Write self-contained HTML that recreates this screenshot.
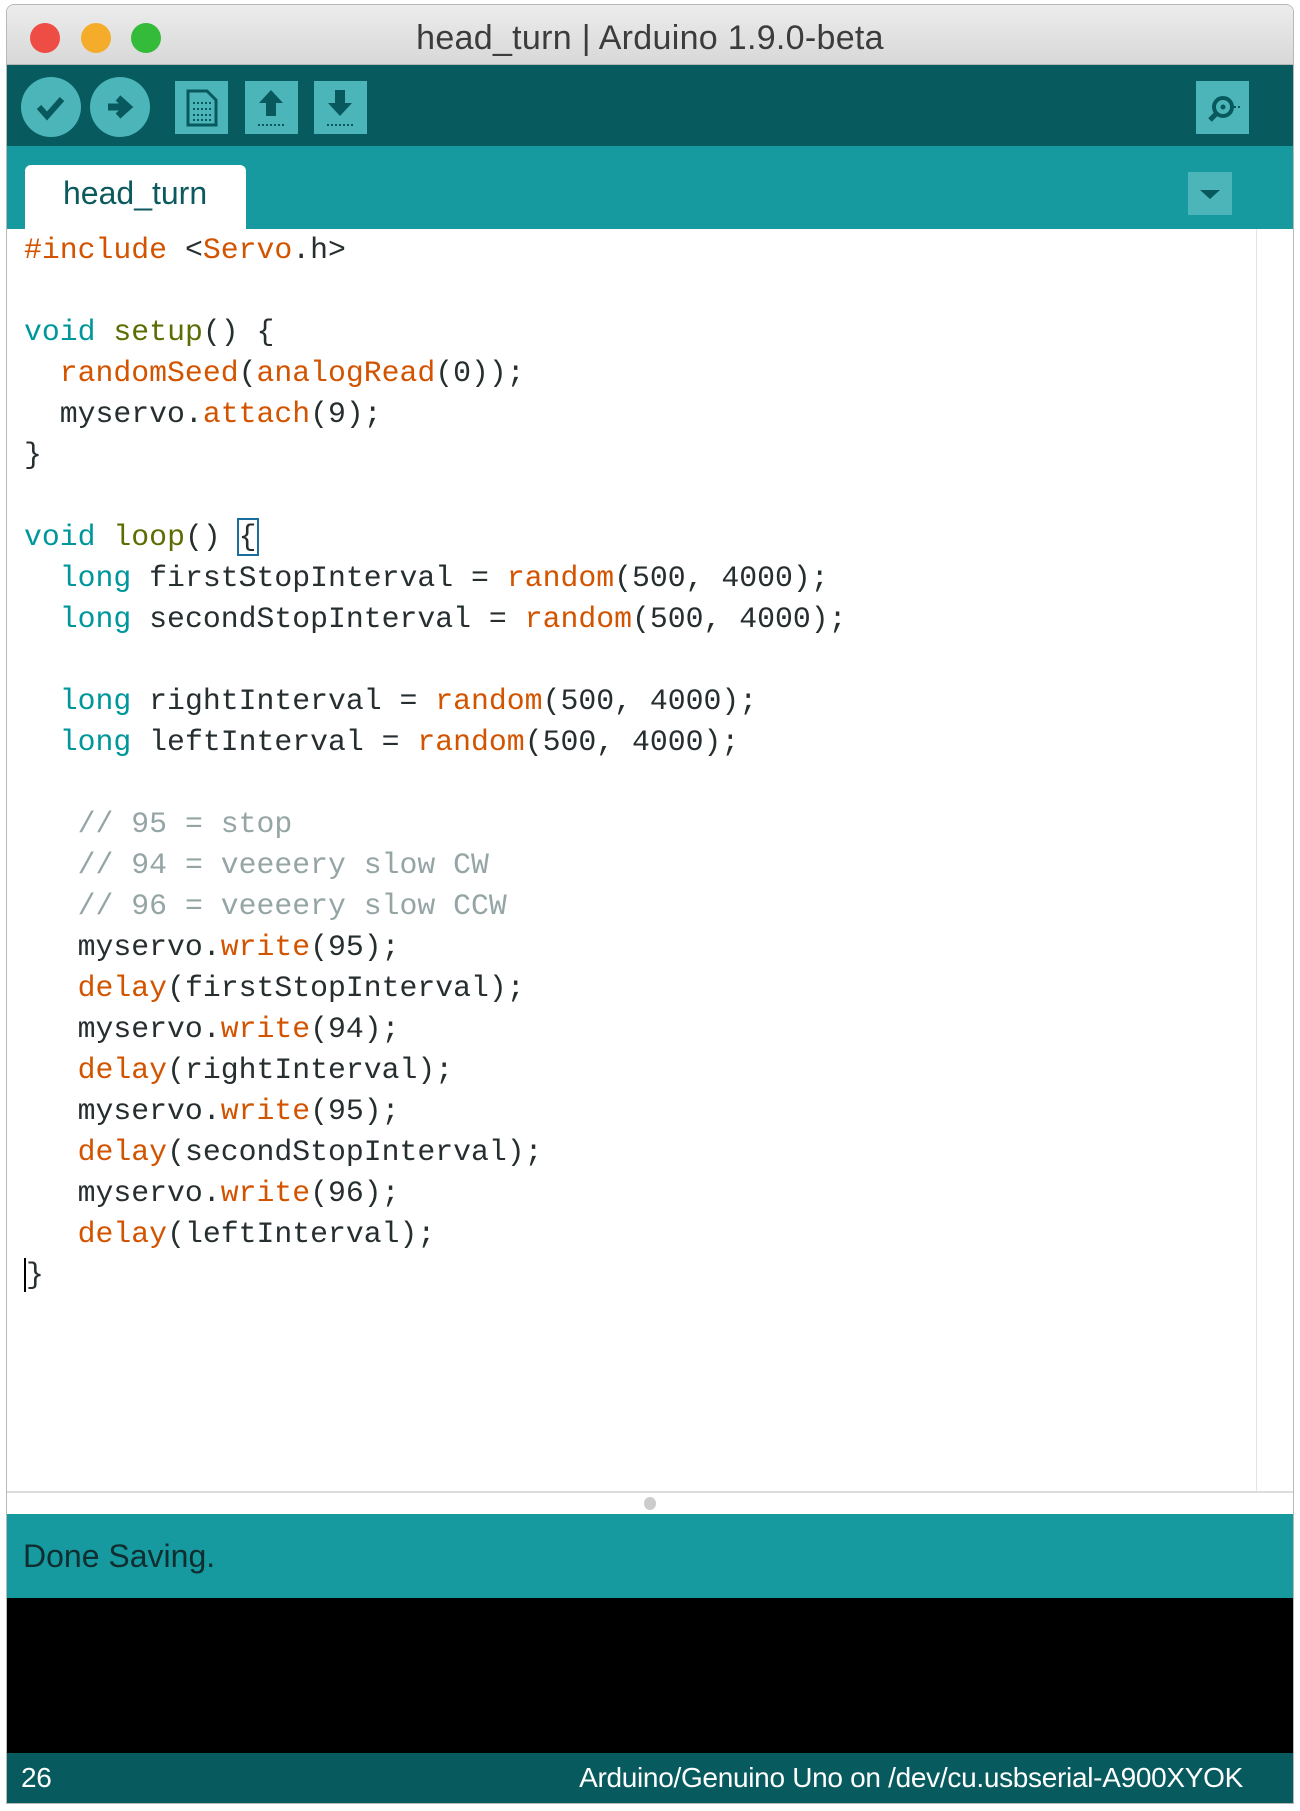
<!DOCTYPE html>
<html><head><meta charset="utf-8"><style>
*{margin:0;padding:0;box-sizing:border-box}
body{width:1300px;height:1811px;background:#fff;position:relative;overflow:hidden;font-family:"Liberation Sans",sans-serif}
.win{position:absolute;left:6px;top:4px;width:1288px;height:1800px;border:1px solid #b8b8b8;border-radius:8px 8px 0 0;overflow:hidden;background:#fff}
.title{position:absolute;left:0;top:0;width:100%;height:60px;background:linear-gradient(#ececec,#d8d8d8);border-bottom:1px solid #b5b5b5;text-align:center;font-size:34px;line-height:66px;color:#3c3c3c;letter-spacing:0.3px}
.dot{position:absolute;top:18px;width:30px;height:30px;border-radius:50%}
.tool{position:absolute;left:0;top:60px;width:100%;height:85px;background:#075a5e}
.tabs{position:absolute;left:0;top:141px;width:100%;height:83px;background:#169aa0}
.btn{position:absolute;background:#4cb5b9}
.tab{position:absolute;left:18px;top:19px;width:221px;height:66px;background:#fff;border-radius:6px 6px 0 0;color:#0c5a5e;font-size:32px;line-height:56px;padding-left:38px}
.editor{position:absolute;left:0;top:224px;width:100%;height:1262px;background:#fff}
.gutter{position:absolute;left:1249px;top:224px;width:1px;height:1262px;background:#e4e4e4}
.code{position:absolute;left:17px;font-family:"Liberation Mono",monospace;font-size:29.8px;white-space:pre;color:#262e30;line-height:41px}
.o{color:#d35400}.k{color:#00979c}.f{color:#5e6d03}.c{color:#95a5a6}
.div{position:absolute;left:0;top:1486px;width:100%;height:23px;background:#fff;border-top:2px solid #ddd}
.status{position:absolute;left:0;top:1509px;width:100%;height:84px;background:#169aa0;font-size:32px;color:#0e2e30;line-height:84px;padding-left:16px}
.con{position:absolute;left:0;top:1593px;width:100%;height:155px;background:#000}
.bot{position:absolute;left:0;top:1748px;width:100%;height:52px;background:#075a5e;color:#fff;font-size:28px;line-height:50px;letter-spacing:-.3px}
</style></head><body>
<div class="win">
<div class="title">head_turn | Arduino 1.9.0-beta
<div class="dot" style="left:23px;background:#ee4d45"></div>
<div class="dot" style="left:74px;background:#f5ac2a"></div>
<div class="dot" style="left:124px;background:#35bb3a"></div>
</div>
<div class="tool">
<svg width="1288" height="85" style="position:absolute;left:0;top:0">
<circle cx="44" cy="42" r="30" fill="#4cb5b9"/>
<path d="M32 42 l8 9 l15 -17" stroke="#07595d" stroke-width="6" fill="none"/>
<circle cx="113" cy="42" r="30" fill="#4cb5b9"/>
<path d="M101 42 h15 M111 33 l10 9 l-10 9" stroke="#07595d" stroke-width="7" fill="none"/>
<rect x="168" y="16" width="53" height="53" fill="#4cb5b9"/>
<path d="M181 26 h19 l9 9 v25 h-28z" fill="none" stroke="#07595d" stroke-width="3"/>
<path d="M186 38 h18 M186 44 h18 M186 50 h18 M186 55 h18" stroke="#07595d" stroke-width="2" stroke-dasharray="2 2"/>
<rect x="238" y="16" width="53" height="53" fill="#4cb5b9"/>
<path d="M264 25 l-12 13 h7 v13 h10 v-13 h7z" fill="#07595d"/><path d="M251 60 h26" stroke="#07595d" stroke-width="2" stroke-dasharray="2 2"/>
<rect x="307" y="16" width="53" height="53" fill="#4cb5b9"/>
<path d="M333 51 l-12 -13 h7 v-13 h10 v13 h7z" fill="#07595d"/><path d="M320 60 h26" stroke="#07595d" stroke-width="2" stroke-dasharray="2 2"/>
<rect x="1189" y="16" width="53" height="53" fill="#4cb5b9"/>
<circle cx="1216" cy="42" r="9" fill="none" stroke="#07595d" stroke-width="4"/><circle cx="1216" cy="42" r="2.5" fill="#07595d"/>
<path d="M1209 49 l-6 6" stroke="#07595d" stroke-width="5"/><path d="M1227 42 h8" stroke="#07595d" stroke-width="2" stroke-dasharray="2 2"/>
</svg>
</div>
<div class="tabs">
<div class="tab">head_turn</div>
<div class="btn" style="left:1181px;top:26px;width:44px;height:43px"></div>
<svg style="position:absolute;left:1181px;top:26px" width="44" height="43"><path d="M12 18 h20 l-10 9z" fill="#07595d"/></svg>
</div>
<div class="editor"></div>
<div class="gutter"></div>
<div class="code" style="top:225px"><span class="o">#include</span> &lt;<span class="o">Servo</span>.h&gt;

<span class="k">void</span> <span class="f">setup</span>() {
  <span class="o">randomSeed</span>(<span class="o">analogRead</span>(0));
  myservo.<span class="o">attach</span>(9);
}

<span class="k">void</span> <span class="f">loop</span>() <span style="outline:2px solid #1a6d9c">{</span>
  <span class="k">long</span> firstStopInterval = <span class="o">random</span>(500, 4000);
  <span class="k">long</span> secondStopInterval = <span class="o">random</span>(500, 4000);

  <span class="k">long</span> rightInterval = <span class="o">random</span>(500, 4000);
  <span class="k">long</span> leftInterval = <span class="o">random</span>(500, 4000);

   <span class="c">// 95 = stop</span>
   <span class="c">// 94 = veeeery slow CW</span>
   <span class="c">// 96 = veeeery slow CCW</span>
   myservo.<span class="o">write</span>(95);
   <span class="o">delay</span>(firstStopInterval);
   myservo.<span class="o">write</span>(94);
   <span class="o">delay</span>(rightInterval);
   myservo.<span class="o">write</span>(95);
   <span class="o">delay</span>(secondStopInterval);
   myservo.<span class="o">write</span>(96);
   <span class="o">delay</span>(leftInterval);
<span style="border-left:2px solid #000">}</span></div>
<div class="div"><div style="position:absolute;left:637px;top:4px;width:12px;height:13px;border-radius:50%;background:#ccc"></div></div>
<div class="status">Done Saving.</div>
<div class="con"></div>
<div class="bot"><span style="position:absolute;left:14px">26</span><span style="position:absolute;right:50px">Arduino/Genuino Uno on /dev/cu.usbserial-A900XYOK</span></div>
</div>
</body></html>
